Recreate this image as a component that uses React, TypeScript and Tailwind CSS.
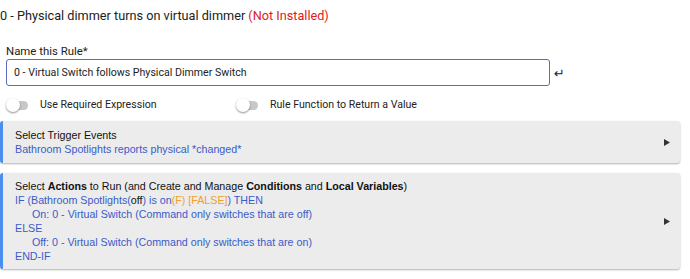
import { useState } from 'react'

function Toggle({ label }: { label: string }) {
  return (
    <div className="flex items-center">
      <div className="relative w-[22px] h-[12px] flex items-center">
        <div className="w-[20px] h-[9px] ml-[2px] rounded-full bg-[#c8c8c8]" />
        <div className="absolute left-0 top-[-1px] w-[14px] h-[14px] rounded-full bg-white shadow-[0_1px_2px_rgba(0,0,0,0.45)]" />
      </div>
      <span className="ml-[12px] text-[10.6px] text-[#222]">{label}</span>
    </div>
  )
}

function Arrow() {
  return (
    <svg width="6" height="7" viewBox="0 0 6 7" className="shrink-0">
      <path d="M0 0 L6 3.5 L0 7 Z" fill="#333" />
    </svg>
  )
}

export default function App() {
  const [name, setName] = useState('0 - Virtual Switch follows Physical Dimmer Switch')

  return (
    <div className="w-[690px] h-[279px] bg-white overflow-hidden font-['Roboto',sans-serif]">
      <div className="pt-[7px] text-[12.7px] leading-[17px] text-[#222]">
        0 - Physical dimmer turns on virtual dimmer <span className="text-[#e0201a]">(Not Installed)</span>
      </div>

      <div className="pl-[6px] mt-[20px]">
        <div className="text-[11.4px] leading-[14px] text-[#222]">Name this Rule*</div>
        <div className="flex items-center mt-[1px]">
          <input
            value={name}
            onChange={e => setName(e.target.value)}
            className="w-[544px] h-[27px] px-[7px] rounded-[3px] border border-[#5c6bc0] text-[10.6px] text-[#222] outline-none"
          />
          <span className="ml-[4px] mt-[2px] text-[13px] text-[#222] font-['DejaVu_Sans',sans-serif]">↵</span>
        </div>
        <div className="flex items-center mt-[12px] h-[14px]">
          <div className="w-[230px]">
            <Toggle label="Use Required Expression" />
          </div>
          <Toggle label="Rule Function to Return a Value" />
        </div>
      </div>

      <div className="mt-[9px] pr-[10px] flex flex-col gap-[10px] font-['Liberation_Sans',sans-serif] text-[10.7px] leading-[14px]">
        <div className="flex items-center bg-[#ececec] border-l-[3px] border-[#4a8ef0] rounded-[3px] shadow-[0_1px_2px_rgba(0,0,0,0.3)] h-[42px] pl-[12px] pr-[10px]">
          <div className="flex-1">
            <div className="text-[#111]">Select Trigger Events</div>
            <div className="text-[#3b5bc9]">Bathroom Spotlights reports physical *changed*</div>
          </div>
          <Arrow />
        </div>

        <div className="flex items-center bg-[#ececec] border-l-[3px] border-[#4a8ef0] rounded-[3px] shadow-[0_1px_2px_rgba(0,0,0,0.3)] h-[96px] pl-[12px] pr-[10px]">
          <div className="flex-1">
            <div className="text-[#111]">
              Select <b>Actions</b> to Run (and Create and Manage <b>Conditions</b> and <b>Local Variables</b>)
            </div>
            <div className="text-[#3b5bc9]">
              IF (Bathroom Spotlights(<span className="text-[#111]">off</span>) is on<span className="text-[#f0a030]">(F)</span> <span className="text-[#f0a030]">[FALSE]</span>) THEN
            </div>
            <div className="text-[#3b5bc9] pl-[17px]">On: 0 - Virtual Switch (Command only switches that are off)</div>
            <div className="text-[#3b5bc9]">ELSE</div>
            <div className="text-[#3b5bc9] pl-[17px]">Off: 0 - Virtual Switch (Command only switches that are on)</div>
            <div className="text-[#3b5bc9]">END-IF</div>
          </div>
          <Arrow />
        </div>
      </div>
    </div>
  )
}
